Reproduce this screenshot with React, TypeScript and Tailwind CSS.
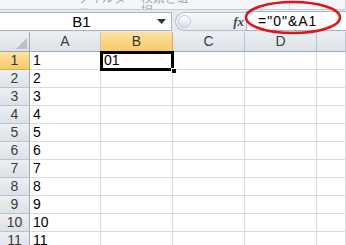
import React from 'react';

const cols = [
  { name: 'A', w: 'w-[71px]' },
  { name: 'B', w: 'w-[72px]' },
  { name: 'C', w: 'w-[72px]' },
  { name: 'D', w: 'w-[72px]' },
  { name: '', w: 'flex-1' },
];

const rows = [1, 2, 3, 4, 5, 6, 7, 8, 9, 10, 11];

const HeaderCell: React.FC<{ label: string; w: string; active?: boolean }> = ({ label, w, active }) => (
  <div
    className={
      active
        ? `${w} shrink-0 h-full flex items-center justify-center bg-gradient-to-b from-[#fbe3a4] to-[#f6cb63] border-r border-b border-r-[#d9ad52] border-b-[#e7a43b] text-[#333]`
        : `${w} shrink-0 h-full flex items-center justify-center bg-gradient-to-b from-[#eceff3] to-[#dde2e8] border-r border-b border-r-[#bcc3cc] border-b-[#9ea9b7] text-[#3c3c3c]`
    }
  >
    {label}
  </div>
);

export default function App() {
  return (
    <div className="w-[346px] h-[245px] overflow-hidden bg-white relative font-['Liberation_Sans',sans-serif] text-[13px]">
      {/* bottom edge of the ribbon */}
      <div className="h-[10px] bg-[#f4f6f9] border-b border-[#c4cbd4] overflow-hidden flex text-[12px] text-[#9aa0a8] leading-none">
        <span className="ml-[78px] -mt-[8px]">フィルター</span>
        <span className="ml-[14px] -mt-[8px]">検索と選択</span>
        <span className="ml-[100px] w-px h-full bg-[#d2d7de]" />
        <span className="ml-[55px] w-px h-full bg-[#d2d7de]" />
      </div>

      {/* formula bar */}
      <div className="h-[22px] bg-[#e6ebf1] flex items-center">
        <div className="w-[172px] h-[19px] bg-white border-y border-r border-[#aab3bf] flex items-center">
          <span className="flex-1 text-center text-[15px] leading-none pl-[6px]">B1</span>
          <svg width="9" height="5" viewBox="0 0 9 5" className="mr-[5px]">
            <path d="M0 0h9L4.5 5z" fill="#333" />
          </svg>
        </div>
        <div className="ml-[3px] w-[71px] h-[19px] rounded-l-full border-y border-l border-[#b7bfca] bg-gradient-to-b from-[#f7f8fa] to-[#e4e8ee] flex items-center">
          <div className="ml-[2px] w-[13px] h-[13px] rounded-full border border-[#c2c8d0] bg-gradient-to-b from-[#ffffff] to-[#d9dee4]" />
          <span className="ml-auto mr-[2px] font-['Liberation_Serif',serif] italic font-bold text-[13px] text-[#4a4a4a] leading-none">fx</span>
        </div>
        <div className="flex-1 h-[20px] bg-white border-y border-l border-[#aab3bf] flex items-center pl-[11px] text-[14px] leading-none tracking-[1px]">
          ="0"&amp;A1
        </div>
      </div>

      {/* sheet */}
      <div className="relative">
        <div className="flex h-[20px] text-[14px]">
          <div className="w-[30px] shrink-0 h-full bg-gradient-to-b from-[#eceff3] to-[#dde2e8] border-r border-b border-r-[#9ea9b7] border-b-[#9ea9b7] flex items-end justify-end p-[2px]">
            <svg width="11" height="11" viewBox="0 0 11 11">
              <path d="M11 0V11H0z" fill="#b9c0c9" />
            </svg>
          </div>
          {cols.map((c) => (
            <HeaderCell key={c.name + c.w} label={c.name} w={c.w} active={c.name === 'B'} />
          ))}
        </div>

        {rows.map((r) => (
          <div key={r} className="flex h-[18px]">
            <div
              className={
                r === 1
                  ? 'w-[30px] shrink-0 h-full flex items-center justify-center bg-gradient-to-b from-[#fbe3a4] to-[#f6cb63] border-r border-b border-r-[#e7a43b] border-b-[#d9ad52] text-[14px] text-[#333]'
                  : 'w-[30px] shrink-0 h-full flex items-center justify-center bg-gradient-to-b from-[#eceff3] to-[#dde2e8] border-r border-b border-r-[#9ea9b7] border-b-[#bcc3cc] text-[14px] text-[#3c3c3c]'
              }
            >
              {r}
            </div>
            {cols.map((c) => (
              <div
                key={c.name + c.w}
                className={`${c.w} shrink-0 h-full border-r border-b border-[#dadcdd] flex items-center pl-[3px] text-[14px] text-black`}
              >
                {c.name === 'A' ? r : c.name === 'B' && r === 1 ? '01' : ''}
              </div>
            ))}
          </div>
        ))}

        {/* active cell B1 */}
        <div className="absolute left-[100px] top-[19px] w-[74px] h-[20px] border-[3px] border-black" />
        <div className="absolute left-[171px] top-[36px] w-[6px] h-[6px] bg-black border border-white" />
      </div>

      {/* red annotation ellipse */}
      <svg className="absolute left-0 top-0 pointer-events-none" width="346" height="245">
        <ellipse cx="293" cy="17.5" rx="47" ry="15.5" fill="none" stroke="#e0141b" strokeWidth="2.5" />
      </svg>
    </div>
  );
}
